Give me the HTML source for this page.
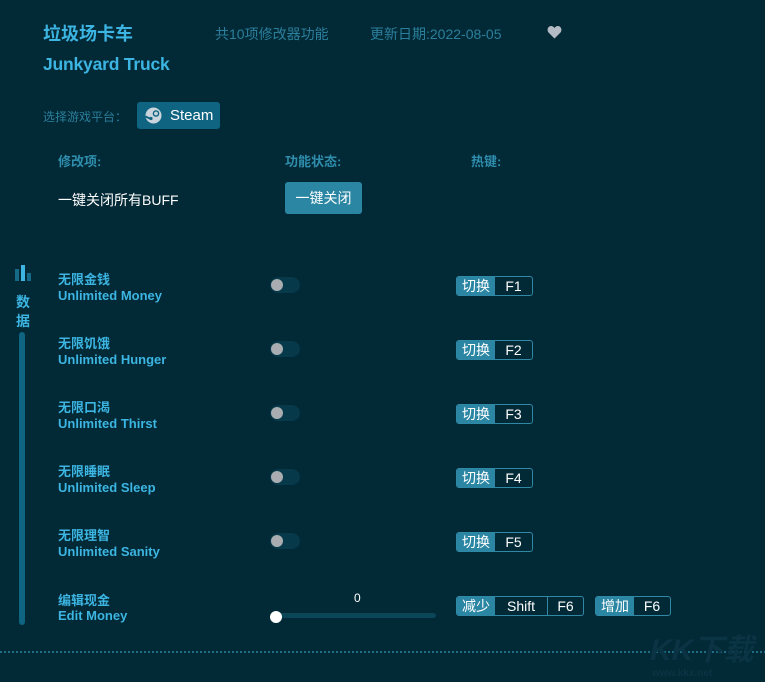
<!DOCTYPE html>
<html><head><meta charset="utf-8"><style>
*{margin:0;padding:0;box-sizing:border-box}
body{width:765px;height:682px;background:#022936;font-family:"Liberation Sans","Noto Sans CJK SC",sans-serif;position:relative;overflow:hidden}
.a{position:absolute;white-space:nowrap}
.t{color:#3cb5e2;font-weight:bold}
.g{color:#2b7f9c;font-size:14px}
.h{color:#2f8eae;font-size:13px;font-weight:bold}
.w{color:#fff;font-size:14px}
.n1{color:#3cb5e2;font-weight:bold;font-size:13px}
.tg{position:absolute;width:30px;height:16px;border-radius:8px;background:#06394a}
.tg i{position:absolute;left:1px;top:2px;width:12px;height:12px;border-radius:50%;background:#a9adb1}
.k{position:absolute;height:20px;border:1px solid #2e88a6;border-radius:3px;display:flex;font-size:14px;color:#fff;overflow:hidden}
.k b{background:#2a86a3;font-weight:normal;padding:0 5px;line-height:18px}
.k span{padding:0 0;line-height:18px;text-align:center;border-left:1px solid #2e88a6}
.k span:first-of-type{border-left:none}
</style></head><body>
<div class="a t" style="left:43px;top:20px;font-size:18px">垃圾场卡车</div>
<div class="a g" style="left:215px;top:24px">共10项修改器功能</div>
<div class="a g" style="left:370px;top:24px">更新日期:2022-08-05</div>
<svg class="a" style="left:547px;top:25px" width="15" height="14" viewBox="0 0 15 14"><path d="M7.5 13.5L1.5 7.5C-0.5 5 1 1 4 1c1.6 0 2.8 1 3.5 2 0.7-1 1.9-2 3.5-2 3 0 4.5 4 2.5 6.5z" fill="#b3bcc4"/></svg>
<div class="a t" style="left:43px;top:54px;font-size:17.5px;letter-spacing:-0.2px">Junkyard Truck</div>
<div class="a" style="left:43px;top:108px;font-size:12px;color:#2b7f9c">选择游戏平台：</div>
<div class="a" style="left:137px;top:102px;width:83px;height:27px;background:#0f6481;border-radius:3px"></div>
<svg class="a" style="left:145px;top:107px" width="17" height="17" viewBox="0 0 17 17"><circle cx="8.5" cy="8.5" r="8" fill="#c9d4dc"/><circle cx="11" cy="6.5" r="2.6" fill="none" stroke="#0f6481" stroke-width="1.4"/><path d="M0.5 9.5L6 12" stroke="#0f6481" stroke-width="2"/><circle cx="6" cy="11.5" r="1.6" fill="#0f6481"/></svg>
<div class="a w" style="left:170px;top:107px;font-size:15px">Steam</div>
<div class="a h" style="left:58px;top:151px">修改项:</div>
<div class="a h" style="left:285px;top:151px">功能状态:</div>
<div class="a h" style="left:471px;top:151px">热键:</div>
<div class="a w" style="left:58px;top:190px">一键关闭所有BUFF</div>
<div class="a" style="left:285px;top:182px;width:77px;height:32px;background:#2a86a3;border-radius:3px;color:#fff;font-size:14px;text-align:center;line-height:32px">一键关闭</div>
<div class="a" style="left:15px;top:269px;width:4px;height:12px;background:#176a87"></div>
<div class="a" style="left:21px;top:265px;width:4px;height:16px;background:#3cb5e2"></div>
<div class="a" style="left:27px;top:273px;width:4px;height:8px;background:#176a87"></div>
<div class="a n1" style="left:16px;top:292px;font-size:14px">数</div>
<div class="a n1" style="left:16px;top:311px;font-size:14px">据</div>
<div class="a" style="left:19px;top:332px;width:6px;height:293px;background:#0f6481;border-radius:3px"></div>

<div class="a n1" style="left:58px;top:269px">无限金钱</div><div class="a n1" style="left:58px;top:288px">Unlimited Money</div>
<div class="tg" style="left:270px;top:277px"><i></i></div>
<div class="k" style="left:456px;top:276px;width:77px"><b>切换</b><span style="flex:1">F1</span></div>

<div class="a n1" style="left:58px;top:333px">无限饥饿</div><div class="a n1" style="left:58px;top:352px">Unlimited Hunger</div>
<div class="tg" style="left:270px;top:341px"><i></i></div>
<div class="k" style="left:456px;top:340px;width:77px"><b>切换</b><span style="flex:1">F2</span></div>

<div class="a n1" style="left:58px;top:397px">无限口渴</div><div class="a n1" style="left:58px;top:416px">Unlimited Thirst</div>
<div class="tg" style="left:270px;top:405px"><i></i></div>
<div class="k" style="left:456px;top:404px;width:77px"><b>切换</b><span style="flex:1">F3</span></div>

<div class="a n1" style="left:58px;top:461px">无限睡眠</div><div class="a n1" style="left:58px;top:480px">Unlimited Sleep</div>
<div class="tg" style="left:270px;top:469px"><i></i></div>
<div class="k" style="left:456px;top:468px;width:77px"><b>切换</b><span style="flex:1">F4</span></div>

<div class="a n1" style="left:58px;top:525px">无限理智</div><div class="a n1" style="left:58px;top:544px">Unlimited Sanity</div>
<div class="tg" style="left:270px;top:533px"><i></i></div>
<div class="k" style="left:456px;top:532px;width:77px"><b>切换</b><span style="flex:1">F5</span></div>

<div class="a n1" style="left:58px;top:590px">编辑现金</div><div class="a n1" style="left:58px;top:608px">Edit Money</div>
<div class="a" style="left:354px;top:591px;color:#fff;font-size:12px">0</div>
<div class="a" style="left:272px;top:613px;width:164px;height:5px;background:#0b4558;border-radius:3px"></div>
<div class="a" style="left:270px;top:611px;width:12px;height:12px;border-radius:50%;background:#fff"></div>
<div class="k" style="left:456px;top:596px;width:128px"><b>减少</b><span style="width:52px">Shift</span><span style="flex:1">F6</span></div>
<div class="k" style="left:595px;top:596px;width:76px"><b>增加</b><span style="flex:1">F6</span></div>

<div class="a" style="left:0;top:651px;width:765px;height:2px;background:repeating-linear-gradient(90deg,#1e6d86 0 2px,transparent 2px 4px)"></div>
<div class="a" style="left:650px;top:625px;font-size:30px;font-weight:bold;color:#0a3443;font-style:italic">KK下载</div>
<div class="a" style="left:652px;top:668px;font-size:10px;font-weight:bold;color:#0a3443">www.kkx.net</div>
</body></html>
